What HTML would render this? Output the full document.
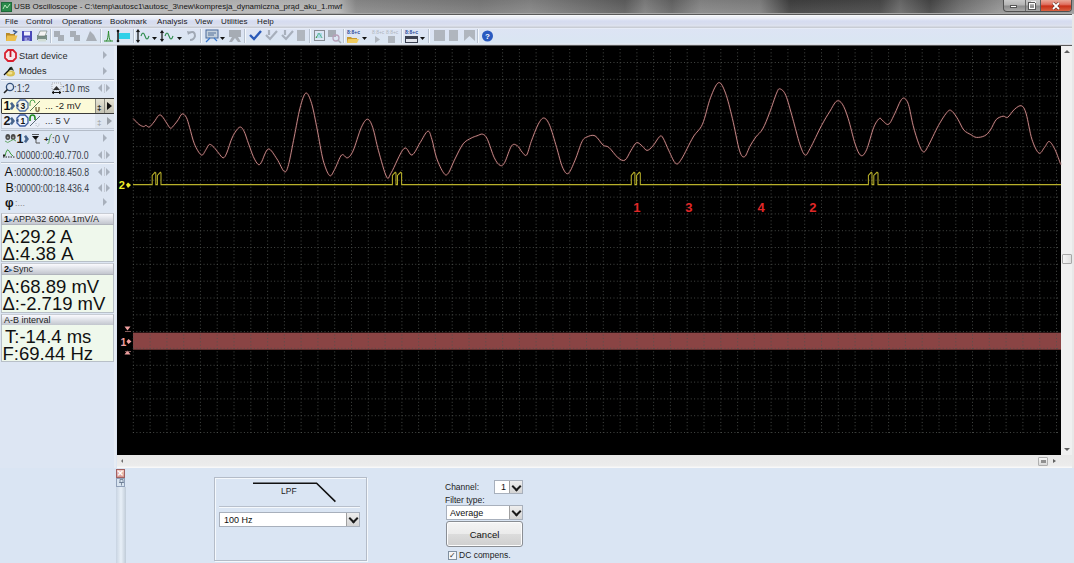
<!DOCTYPE html>
<html><head><meta charset="utf-8">
<style>
*{margin:0;padding:0;box-sizing:border-box}
html,body{width:1074px;height:563px;overflow:hidden;background:#dae5f3;font-family:"Liberation Sans",sans-serif;position:relative}
.a{position:absolute;white-space:nowrap}
#title{left:0;top:0;width:1074px;height:13px;background:linear-gradient(rgba(0,0,0,0.06),rgba(255,255,255,0.08)),linear-gradient(90deg,#a0a0a0 0,#b6b6b6 14px,#b8b8b8 338px,#8a8a8a 356px,#7a7a7a 480px,#858585 530px,#686868 600px,#5e5e5e 625px,#7e7e7e 645px,#646464 672px,#868686 700px,#808080 760px,#404040 790px,#484848 880px,#6a6a6a 900px,#464646 930px,#707070 960px,#959595 1000px,#9a9a9a 1074px)}
#title .t{left:14px;top:2px;font-size:7.95px;color:#141414}
#menu{left:0;top:15px;width:1074px;height:13px;background:linear-gradient(#ffffff 0,#f0f3f8 1px,#eceff8 3px,#d6dcf0 6px,#d8ddee 9px,#dfe3ee 11px,#c8ccd4 12px)}
#menu span{position:absolute;top:2px;font-size:8px;color:#1a1a1a;letter-spacing:0.1px}
#tb{left:0;top:28px;width:1074px;height:18px;background:linear-gradient(#eef2f8 0,#dde4f4 1px,#dae6f2 15px,#e8ecf4 16px,#c4c8d0 17px)}
#left{left:0;top:46px;width:117px;height:422px;background:#dde6f3}
#scope{left:117px;top:46px;width:944px;height:409px;background:#000}
#vsb{left:1061px;top:46px;width:11px;height:409px;background:#f0f0f0}
#rb{left:1072px;top:14px;width:2px;height:549px;background:#e8e8e8}
#hsb{left:117px;top:455px;width:955px;height:13px;background:linear-gradient(#e8e8e8,#ececec 11px,#f8f8f8 12px)}
#bottom{left:0;top:468px;width:1074px;height:95px;background:#dae5f3}
.lp{font-size:9.5px;color:#2a2a2a}
.hdr{left:1px;width:113px;height:12px;background:linear-gradient(#fafafe,#e6e8ee 35%,#c2c6ce);border:1px solid #b0b4bc;border-top-color:#c8ccd4;font-size:9px;color:#222;padding-left:2px;line-height:10px}
.val{left:1px;width:113px;background:#eff8ec;border:1px solid #b8c0c8;border-top:none}
.tri{position:absolute;width:0;height:0;border-top:4px solid transparent;border-bottom:4px solid transparent;border-left:4px solid #a8b0bc}
.lr{position:absolute;width:13px;height:9px}
.lr:before{content:"";position:absolute;left:0;top:0.5px;border-top:4px solid transparent;border-bottom:4px solid transparent;border-right:4px solid #a8b0bc}
.lr:after{content:"";position:absolute;left:8px;top:0.5px;border-top:4px solid transparent;border-bottom:4px solid transparent;border-left:4px solid #a8b0bc}
.lr i{position:absolute;left:5.5px;top:0;width:1px;height:9px;background:#c4cad4}
.num{font-size:10px;color:#3a4048;transform:scaleX(0.87);transform-origin:0 0}
.cb{background:#fff;border:1px solid #a8b0bc}
.cb span{position:absolute;top:2px;font-size:9px;color:#111}
.cb i{position:absolute;right:0;top:0;width:13px;height:100%;background:linear-gradient(#eee,#d4d4d4);border-left:1px solid #a0a0a0}
.cb i:after{content:"";position:absolute;left:2.5px;top:2px;width:5px;height:5px;border-right:2px solid #1a1a1a;border-bottom:2px solid #1a1a1a;transform:rotate(45deg)}
.big{position:absolute;left:0.5px;font-size:18.5px;color:#111;line-height:18px}
</style></head><body>
<div id="title" class="a"><svg class="a" style="left:1px;top:2px" width="11" height="10" viewBox="0 0 11 10"><rect x="0" y="0" width="11" height="10" fill="#1e6a3a"/><rect x="1" y="1" width="9" height="8" fill="#2a8a4a"/><path d="M2 7L4 3L6 6L9 2" stroke="#c8f0c8" stroke-width="0.9" fill="none"/></svg><div class="a t">USB Oscilloscope - C:\temp\autosc1\autosc_3\new\kompresja_dynamiczna_prąd_aku_1.mwf</div></div>

<div class="a" style="left:1003px;top:0;width:69px;height:12px;border:1px solid #505050;border-top:none;border-radius:0 0 4px 4px;overflow:hidden;background:linear-gradient(#c8c8c8,#b4b4b4 45%,#8c8c8c 55%,#a8a8a8)">
 <div class="a" style="left:36px;top:0;width:32px;height:11px;background:linear-gradient(#e8a898,#e07060 40%,#c83018 55%,#d86040)"></div>
 <div class="a" style="left:21px;top:0;width:1px;height:11px;background:#6a6a6a"></div>
 <div class="a" style="left:36px;top:0;width:1px;height:11px;background:#5a5a5a"></div>
 <div class="a" style="left:6px;top:5px;width:7px;height:3px;background:#fff;border:1px solid #555"></div>
 <div class="a" style="left:25px;top:3px;width:6px;height:6px;border:1.5px solid #fff;box-shadow:0 0 0 1px #555"></div>
 <div class="a" style="left:26.5px;top:1px;width:5px;height:2px;border-top:1px solid #eee;border-right:1px solid #eee"></div>
 <svg class="a" style="left:48px;top:2px" width="8" height="8" viewBox="0 0 8 8"><path d="M1 1L7 7M7 1L1 7" stroke="#5a2a20" stroke-width="3"/><path d="M1 1L7 7M7 1L1 7" stroke="#fff" stroke-width="1.8"/></svg>
</div>
<div class="a" style="left:0;top:13px;width:1074px;height:1px;background:#a8a8a8"></div>
<div class="a" style="left:0;top:14px;width:1074px;height:1px;background:#5a5a5a"></div>
<div id="menu" class="a"><span style="left:5px">File</span><span style="left:26px">Control</span><span style="left:62px">Operations</span><span style="left:110px">Bookmark</span><span style="left:157px">Analysis</span><span style="left:195px">View</span><span style="left:221px">Utilities</span><span style="left:257px">Help</span></div>

<div id="tb" class="a">
<svg class="a" style="left:0;top:-1px" width="500" height="18" viewBox="0 0 500 18">
 <g transform="translate(6,3)"><path d="M0 3H3.5L4.5 4H9V11H0Z" fill="#b88a28"/><path d="M1 5.5H11.5L9.5 11H0Z" fill="#ecc050"/><path d="M7 0.5L10.5 2L8 4" stroke="#3a5a90" stroke-width="1.4" fill="none"/></g>
 <g transform="translate(22,4)"><rect x="0" y="0" width="10" height="10" fill="#4848b8"/><rect x="2" y="0.5" width="6" height="4" fill="#f0f0ff"/><rect x="2.5" y="6.5" width="5" height="3.5" fill="#a0a0e0"/><rect x="5.5" y="7" width="1" height="2" fill="#303080"/></g>
 <g transform="translate(37,4)"><rect x="0" y="4" width="10" height="5" fill="#7a9088"/><path d="M3 0H10L8 5H1Z" fill="#f4f4f4" stroke="#6a7a70" stroke-width="0.6"/><rect x="1" y="8" width="8" height="2.5" fill="#d0dcd4"/></g>
 <path d="M50.5 2V16" stroke="#b8c2d0"/><path d="M51.5 2V16" stroke="#f4f8fc"/>
 <g fill="#a8aeb6"><rect x="54" y="4" width="6" height="6"/><rect x="58" y="8" width="6" height="6"/><rect x="70" y="4" width="6" height="6"/><rect x="74" y="8" width="6" height="6"/><path d="M86 14L90 4L94 8L97 14Z"/></g>
 <path d="M100.5 2V16" stroke="#b8c2d0"/><path d="M101.5 2V16" stroke="#f4f8fc"/>
 <path d="M104 14H113M106 14C107 14 108 12 108.5 4C109 12 110 14 111 14" stroke="#2a8a2a" stroke-width="1" fill="none"/>
 <g transform="translate(117,3)"><rect x="2" y="3" width="11" height="6" fill="#30d0e8"/><path d="M1 0V12" stroke="#111" stroke-width="1.5"/><circle cx="1" cy="1" r="1.3" fill="#111"/><circle cx="1" cy="11" r="1.3" fill="#111"/></g>
 <path d="M133.5 2V16" stroke="#b8c2d0"/><path d="M134.5 2V16" stroke="#f4f8fc"/>
 <g transform="translate(136,2)"><path d="M2 1V13M0.5 3L2 1L3.5 3M0.5 11L2 13L3.5 11" stroke="#111" stroke-width="1.2" fill="none"/><path d="M5 7Q7 1 9 7T13 7" stroke="#2a8a4a" stroke-width="1.1" fill="none"/><path d="M16 8H21L18.5 11Z" fill="#111"/></g>
 <g transform="translate(160,2)"><path d="M2 2V12M0.5 4L2 2L3.5 4M0.5 10L2 12L3.5 10" stroke="#111" stroke-width="1.2" fill="none"/><path d="M5 7Q7 1 9 7T13 7" stroke="#2a8a4a" stroke-width="1.1" fill="none"/><path d="M17 8H22L19.5 11Z" fill="#111"/></g>
 <path d="M189 6Q195 3 195 9Q194 13 190 13" stroke="#a0a8b4" stroke-width="2" fill="none"/><path d="M187 4L191 5L188 8Z" fill="#a0a8b4"/>
 <path d="M200.5 2V16" stroke="#b8c2d0"/><path d="M201.5 2V16" stroke="#f4f8fc"/>
 <g transform="translate(205,2)"><rect x="1" y="1" width="12" height="8" fill="#c4d0dc" stroke="#4a6a9a"/><path d="M3 4H11M3 6H9" stroke="#3a5a8a" stroke-width="0.8"/><path d="M5 9L1 13M9 9L12 12" stroke="#3a7ad0" stroke-width="1.2"/><path d="M15 8H20L17.5 11Z" fill="#111"/></g>
 <g transform="translate(229,2)" fill="#a6acb4"><rect x="0" y="1" width="12" height="7"/><path d="M3 8L0 13H3L6 9L9 13H12L9 8Z"/></g>
 <path d="M244.5 2V16" stroke="#b8c2d0"/><path d="M245.5 2V16" stroke="#f4f8fc"/>
 <path d="M250 8L254 12L261 4" stroke="#2a5ab8" stroke-width="2.4" fill="none"/>
 <path d="M266 8L270 12L277 4M269 3V8" stroke="#a8b0bc" stroke-width="2.2" fill="none"/>
 <path d="M282 8L286 12L293 4M285 3V8" stroke="#a8b0bc" stroke-width="2.2" fill="none"/>
 <rect x="297" y="3" width="8" height="11" fill="#b0b6be"/>
 <path d="M309.5 2V16" stroke="#b8c2d0"/><path d="M310.5 2V16" stroke="#f4f8fc"/>
 <g transform="translate(314,3)"><rect x="0.5" y="0.5" width="10" height="10" fill="none" stroke="#333" stroke-dasharray="1 1"/><path d="M2 8L5 3L8 8" stroke="#2a8a2a" fill="none"/><rect x="3" y="3" width="5" height="5" fill="#8ad0e0" opacity="0.6"/></g>
 <g transform="translate(328,2)" fill="#a6acb4"><rect x="0" y="1" width="8" height="7"/><circle cx="8" cy="9" r="3" fill="none" stroke="#b8a0b8" stroke-width="1.3"/><path d="M10 11L13 14" stroke="#a6acb4" stroke-width="1.5"/></g>
 <path d="M343.5 2V16" stroke="#b8c2d0"/><path d="M344.5 2V16" stroke="#f4f8fc"/>
 <g transform="translate(347,2)"><text x="0" y="5" font-size="5" fill="#2a4a9a" font-family="Liberation Sans" font-weight="bold">8:8+c</text><path d="M0 8H4L5 9H10V14H0Z" fill="#c89a30"/><path d="M1 10H12L10 14H0Z" fill="#f0cc60"/><path d="M15 8H20L17.5 11Z" fill="#111"/></g>
 <g transform="translate(372,2)" fill="#b0b6be"><text x="0" y="5" font-size="5" font-family="Liberation Sans">8:8+c</text><path d="M3 7L8 10.5L3 14Z"/></g>
 <g transform="translate(386,2)" fill="#b0b6be"><text x="0" y="5" font-size="5" font-family="Liberation Sans">8:8+c</text><rect x="2" y="7" width="7" height="7"/></g>
 <path d="M401.5 2V16" stroke="#b8c2d0"/><path d="M402.5 2V16" stroke="#f4f8fc"/>
 <g transform="translate(405,2)"><text x="0" y="5" font-size="5" fill="#2a4a9a" font-family="Liberation Sans" font-weight="bold">8:8+c</text><rect x="0" y="7" width="13" height="7" fill="#3a4050"/><rect x="1" y="10" width="11" height="3" fill="#e0e4ec"/><path d="M15 8H20L17.5 11Z" fill="#111"/></g>
 <path d="M428.5 2V16" stroke="#b8c2d0"/><path d="M429.5 2V16" stroke="#f4f8fc"/>
 <g fill="#b0b6be"><rect x="434" y="3" width="11" height="11"/><rect x="449" y="3" width="9" height="11"/><path d="M464 3H475V14L469.5 9L464 14Z"/></g>
 <path d="M477.5 2V16" stroke="#b8c2d0"/><path d="M478.5 2V16" stroke="#f4f8fc"/>
 <circle cx="487.5" cy="9" r="5.5" fill="#2a5ac0"/><text x="487.5" y="12" font-size="8" font-weight="bold" fill="#fff" text-anchor="middle" font-family="Liberation Sans">?</text>
</svg>
</div>


<div id="left" class="a">
 <svg class="a" style="left:4px;top:3px" width="13" height="13" viewBox="0 0 13 13"><path d="M4 1H9L12 4V9L9 12H4L1 9V4Z" fill="#f4e8ec" stroke="#d82030" stroke-width="1.8"/><rect x="5.6" y="1.5" width="1.8" height="6.5" fill="#c81828"/></svg>
 <div class="a lp" style="left:19px;top:4.5px;font-size:9.2px">Start device</div>
 <div class="a tri" style="left:103px;top:4.5px"></div>
 <svg class="a" style="left:3px;top:19px" width="13" height="12" viewBox="0 0 13 12"><ellipse cx="7.5" cy="8.5" rx="4.5" ry="3" fill="#d8c050"/><ellipse cx="7" cy="8" rx="2.5" ry="1.5" fill="#f0e090"/><path d="M5 5Q7 1 9 2L11 6Q8 4 5 5Z" fill="#2a3a2a"/><path d="M1 10L8 3" stroke="#111" stroke-width="1.3"/></svg>
 <div class="a lp" style="left:19px;top:20px;font-size:9.2px">Modes</div>
 <div class="a tri" style="left:103px;top:20.5px"></div>
 <div class="a" style="left:1px;top:33px;width:113px;height:1px;background:#b4bcc8"></div>
 <div class="a" style="left:1px;top:34px;width:113px;height:1px;background:#f4f7fb"></div>
 <svg class="a" style="left:3px;top:36px" width="12" height="12" viewBox="0 0 12 12"><circle cx="7" cy="5" r="3.6" fill="none" stroke="#33507a" stroke-width="1.3"/><path d="M4.5 7.5 L1 11" stroke="#222" stroke-width="1.6"/></svg>
 <div class="a lp" style="left:14px;top:36px;font-size:10.5px;color:#3a3e48;transform:scaleX(0.9);transform-origin:0 0">:1:2</div>
 <svg class="a" style="left:51px;top:36px" width="11" height="12" viewBox="0 0 11 12"><rect x="1" y="1" width="9" height="7" fill="#e8edf4" stroke="#888" stroke-width="0.6" stroke-dasharray="1 1"/><path d="M2 8 L5.5 4 L9 8Z" fill="#333"/><path d="M1 10.5H10M1 10.5l2-1.5M1 10.5l2 1.5M10 10.5l-2-1.5M10 10.5l-2 1.5" stroke="#111" stroke-width="1"/></svg>
 <div class="a lp" style="left:61.5px;top:36px;font-size:10.5px;color:#3a3e48;transform:scaleX(0.88);transform-origin:0 0">:10 ms</div>
 <div class="a lr" style="left:98px;top:37.5px"><i></i></div>
 <!-- channel 1 row -->
 <div class="a" style="left:1px;top:52px;width:114px;height:16px;background:#fcfad8;border:1px solid #3a3a3a;border-radius:1px"></div>
 <div class="a" style="left:95px;top:53px;width:9px;height:14px;background:linear-gradient(#e6e4d4,#c4c2b4);border-left:1px solid #8a8a80"></div>
 <div class="a" style="left:104px;top:53px;width:10px;height:14px;background:linear-gradient(#e6e4d4,#c4c2b4);border-left:1px solid #8a8a80"></div>
 <div class="a" style="left:97px;top:57px;font-size:8px;font-weight:bold;color:#111">&#x2021;</div>
 <div class="a" style="left:107px;top:56px;width:0;height:0;border-top:4px solid transparent;border-bottom:4px solid transparent;border-left:5px solid #111"></div>
 <div class="a" style="left:3.5px;top:52.5px;font-size:12.5px;font-weight:bold;color:#111">1</div>
 <svg class="a" style="left:10px;top:55.5px" width="5" height="8" viewBox="0 0 5 8"><path d="M0 1.5L2 0L5 4L2 8L0 6.5L1.5 4Z" fill="#46648c"/></svg>
 <svg class="a" style="left:16px;top:53px" width="13" height="13" viewBox="0 0 13 13"><path d="M4 1H9L12 4V9L9 12H4L1 9V4Z" fill="#f4f4e8" stroke="#5070a8" stroke-width="1.3"/><path d="M0 6.5L2.5 4.5V8.5Z" fill="#2a4a7a"/><text x="6.8" y="9.8" font-size="8.5" font-weight="bold" text-anchor="middle" fill="#111" font-family="Liberation Sans">3</text></svg>
 <svg class="a" style="left:29px;top:53px" width="12" height="14" viewBox="0 0 12 14"><path d="M1 7V4Q1 1 3.5 1Q6 1 6 4" stroke="#4aa04a" stroke-width="1" fill="none"/><path d="M1 12L11 2" stroke="#5a7a5a" stroke-width="1"/><path d="M7 8V10Q7 12.5 8.5 12.5Q10 12.5 10 10V8" stroke="#8a7a50" stroke-width="1.6" fill="none"/></svg>
 <div class="a lp" style="left:45px;top:54px;color:#222">... -2 mV</div>
 <!-- channel 2 row -->
 <div class="a" style="left:1px;top:68px;width:114px;height:15px;background:#e9eef8;border:1px solid #c4ccd8;border-top:none"></div>
 <div class="a" style="left:95px;top:68px;width:19px;height:14px;background:#dde4ee"></div>
 <div class="a" style="left:97px;top:72px;font-size:8px;color:#999">&#x2021;</div>
 <div class="a" style="left:107px;top:71px;width:0;height:0;border-top:4px solid transparent;border-bottom:4px solid transparent;border-left:5px solid #9aa0a8"></div>
 <div class="a" style="left:3.5px;top:67.5px;font-size:12.5px;font-weight:bold;color:#1a1a1a">2</div>
 <svg class="a" style="left:10px;top:71px" width="5" height="8" viewBox="0 0 5 8"><path d="M0 1.5L2 0L5 4L2 8L0 6.5L1.5 4Z" fill="#46648c"/></svg>
 <svg class="a" style="left:16px;top:68px" width="13" height="13" viewBox="0 0 13 13"><path d="M4 1H9L12 4V9L9 12H4L1 9V4Z" fill="#eef2fa" stroke="#3a5aa0" stroke-width="1.3"/><path d="M0 6.5L2.5 4.5V8.5Z" fill="#2a4a7a"/><text x="6.8" y="9.8" font-size="8.5" font-weight="bold" text-anchor="middle" fill="#111" font-family="Liberation Sans">1</text></svg>
 <svg class="a" style="left:29px;top:68px" width="12" height="14" viewBox="0 0 12 14"><path d="M1 7V4Q1 1 3.5 1Q6 1 6 4V6" stroke="#208a20" stroke-width="1.6" fill="none"/><path d="M1 12L11 2" stroke="#5a6a7a" stroke-width="1"/><path d="M7 9V10Q7 12.5 8.5 12.5Q10 12.5 10 10V9" stroke="#a0a8b0" stroke-width="0.8" stroke-dasharray="1 1" fill="none"/></svg>
 <div class="a lp" style="left:45px;top:69px;color:#333">... 5 V</div>
 <div class="a" style="left:1px;top:84px;width:113px;height:1px;background:#b4bcc8"></div>
 <!-- trigger row -->
 <svg class="a" style="left:5px;top:86px" width="11" height="12" viewBox="0 0 11 12"><ellipse cx="2.8" cy="5" rx="2.4" ry="3" fill="#4a4a4a"/><ellipse cx="8.2" cy="5" rx="2.4" ry="3" fill="#4a4a4a"/><circle cx="2.8" cy="5.5" r="1" fill="#aaa"/><circle cx="8.2" cy="5.5" r="1" fill="#aaa"/><path d="M0 9Q2.75 12 5.5 9T11 9" stroke="#5aa05a" stroke-width="0.9" fill="none"/></svg>
 <div class="a" style="left:16.5px;top:85.5px;font-size:12.5px;font-weight:bold;color:#1a1a1a">1</div>
 <svg class="a" style="left:23.5px;top:88.5px" width="5" height="8" viewBox="0 0 5 8"><path d="M0 1.5L2 0L5 4L2 8L0 6.5L1.5 4Z" fill="#46648c"/></svg>
 <svg class="a" style="left:31px;top:87px" width="10" height="11" viewBox="0 0 10 11"><path d="M1 1.5H8" stroke="#333" stroke-width="0.8"/><path d="M1 3H8L4.5 7Z" fill="#111"/><path d="M5 6V10H9" stroke="#555" stroke-width="1" fill="none"/></svg>
 <div class="a" style="left:44px;top:89px;font-size:8px;font-weight:bold;color:#222">+</div>
 <svg class="a" style="left:47px;top:87px" width="6" height="12" viewBox="0 0 6 12"><path d="M0.5 11Q2 11 2.5 6T5 1" stroke="#5aa05a" stroke-width="1" fill="none"/></svg>
 <div class="a lp" style="left:52px;top:86.5px;font-size:10.5px;color:#3a3e48;transform:scaleX(0.92);transform-origin:0 0">:0 V</div>
 <div class="a tri" style="left:103px;top:88px"></div>
 <!-- time row -->
 <svg class="a" style="left:2px;top:100px" width="14" height="13" viewBox="0 0 14 13"><path d="M3 10 Q5 1 7 5 T11 10" stroke="#3a9a3a" stroke-width="1" fill="none"/><path d="M1 11H13" stroke="#222" stroke-dasharray="1.5 1"/><path d="M2 8V11M1 9.5H3" stroke="#222"/></svg>
 <div class="a num" style="left:16px;top:104px">00000:00:40.770.0</div>
 <div class="a lr" style="left:98px;top:104px"><i></i></div>
 <div class="a" style="left:1px;top:116px;width:113px;height:1px;background:#b4bcc8"></div>
 <div class="a" style="left:1px;top:117px;width:113px;height:1px;background:#f4f7fb"></div>
 <div class="a" style="left:4.5px;top:118.5px;font-size:12.5px;color:#111">A</div>
 <div class="a num" style="left:14px;top:121px">:00000:00:18.450.8</div>
 <div class="a lr" style="left:98px;top:121px"><i></i></div>
 <div class="a" style="left:5.5px;top:134.5px;font-size:12.5px;color:#111">B</div>
 <div class="a num" style="left:14px;top:136.5px">:00000:00:18.436.4</div>
 <div class="a lr" style="left:98px;top:137px"><i></i></div>
 <div class="a" style="left:5px;top:150px;font-size:12px;font-weight:bold;color:#111">&#x3C6;</div>
 <div class="a" style="left:15px;top:152px;font-size:9px;color:#888">:...</div>
 <div class="a tri" style="left:103px;top:152px"></div>
 <!-- measure panels -->
 <div class="a hdr" style="top:167px"><b style="color:#111">1</b><span style="color:#3a6aa8;font-size:7px">&#x25B8;</span>APPA32 600A 1mV/A</div>
 <div class="a val" style="top:179px;height:37px"><div class="big" style="top:3px">A:29.2 A</div><div class="big" style="top:20.3px">&#x394;:4.38 A</div></div>
 <div class="a hdr" style="top:217px"><b style="color:#111">2</b><span style="color:#3a6aa8;font-size:7px">&#x25B8;</span>Sync</div>
 <div class="a val" style="top:229px;height:38px"><div class="big" style="top:3px">A:68.89 mV</div><div class="big" style="top:20.3px">&#x394;:-2.719 mV</div></div>
 <div class="a hdr" style="top:268px">A-B interval</div>
 <div class="a val" style="top:279px;height:37px"><div class="big" style="top:3px;left:3px">T:-14.4 ms</div><div class="big" style="top:20.3px">F:69.44 Hz</div></div>
</div>

<div class="a" style="left:114px;top:46px;width:2px;height:422px;background:#e6ecf4"></div>
<div id="scope" class="a"></div>
<div class="a" style="left:117px;top:45px;width:955px;height:1px;background:#5a5a5a"></div>
<div id="vsb" class="a">
 <div class="a" style="left:3px;top:4px;border-left:3px solid transparent;border-right:3px solid transparent;border-bottom:3px solid #606060"></div>
 <div class="a" style="left:1px;top:208px;width:10px;height:10px;background:linear-gradient(90deg,#f6f6f6,#e0e0e0);border:1px solid #a8a8a8;border-radius:1px"></div>
 <div class="a" style="left:3px;top:402px;border-left:3px solid transparent;border-right:3px solid transparent;border-top:3px solid #606060"></div>
</div>
<div id="rb" class="a"></div>

<div id="hsb" class="a">
 <div class="a" style="left:4px;top:4px;border-top:2.5px solid transparent;border-bottom:2.5px solid transparent;border-right:2.5px solid #707070"></div>
 <div class="a" style="left:921px;top:2px;width:10px;height:9px;background:linear-gradient(#f8f8f8,#d8d8d8);border:1px solid #b0b0b0;border-radius:1px"><div class="a" style="left:2px;top:2px;width:5px;height:3px;background:#909090"></div></div>
 <div class="a" style="left:936px;top:4px;border-top:2.5px solid transparent;border-bottom:2.5px solid transparent;border-left:3px solid #606060"></div>
</div>
<div id="bottom" class="a">
 <div class="a" style="left:116px;top:0;width:10px;height:95px;background:linear-gradient(90deg,#c8d4e2,#e8f0f8 50%,#c0ccd8)"></div>
 <div class="a" style="left:116px;top:0;width:10px;height:19px;background:#dae5f3"></div>
 <div class="a" style="left:116px;top:1px;width:9px;height:9px;background:linear-gradient(#f0c8c0,#d89890);border:1px solid #a06060;color:#fff;font-size:8px;line-height:7px;text-align:center;font-weight:bold">&#x2715;</div>
 <div class="a" style="left:116px;top:10px;width:9px;height:9px;background:#d8e4f0;border:1px solid #90a0b8"><svg class="a" style="left:1px;top:0" width="7" height="7" viewBox="0 0 7 7"><path d="M2 0.5H5V3.5H2ZM1 3.5H6M3.5 3.5V6.5" stroke="#6a7a90" stroke-width="0.8" fill="none"/></svg></div>
 <div class="a" style="left:214px;top:9px;width:153px;height:84px;border:1px solid #b4bcc8;box-shadow:inset 1px 1px 0 #f4f8fc, 1px 1px 0 #f4f8fc"></div>
 <svg class="a" style="left:240px;top:10px" width="110" height="30" viewBox="0 0 110 30"><path d="M13 5.3H76.6L95.4 23.6" stroke="#111" stroke-width="1.6" fill="none"/></svg>
 <div class="a" style="left:281px;top:18px;font-size:8.5px;color:#222">LPF</div>
 <div class="a" style="left:219px;top:38px;width:141px;height:1px;background:#b8c0cc"></div>
 <div class="a" style="left:219px;top:39px;width:141px;height:1px;background:#f4f8fc"></div>
 <div class="a cb" style="left:219px;top:44px;width:141px;height:15px"><span style="left:4px">100 Hz</span><i></i></div>
 <div class="a" style="left:445px;top:14px;font-size:8.5px;color:#222">Channel:</div>
 <div class="a cb" style="left:494px;top:12px;width:29px;height:14px"><span style="left:6px;top:1px">1</span><i></i></div>
 <div class="a" style="left:445px;top:27px;font-size:8.5px;color:#222">Filter type:</div>
 <div class="a cb" style="left:446px;top:37px;width:77px;height:15px"><span style="left:3px">Average</span><i></i></div>
 <div class="a" style="left:446px;top:53px;width:77px;height:26px;border:1px solid #8a8e94;border-radius:3px;background:linear-gradient(#f4f4f4,#ebebeb 50%,#dcdcdc 51%,#cfcfcf);box-shadow:inset 0 0 0 1px #fcfcfc"><div class="a" style="left:0;width:75px;top:7px;text-align:center;font-size:9.5px;color:#111">Cancel</div></div>
 <div class="a" style="left:448px;top:83px;width:9px;height:9px;border:1px solid #8090a0;background:#f4f6f8;font-size:8px;line-height:7px;color:#333;text-align:center">&#x2713;</div>
 <div class="a" style="left:459px;top:82px;font-size:8.5px;color:#222">DC compens.</div>
</div>

<svg class="a" style="left:0;top:0" width="1074" height="563" viewBox="0 0 1074 563">
<rect x="133" y="332.7" width="928" height="17" fill="#8a4444"/>
<g stroke="#505450" stroke-opacity="0.85" stroke-width="1" stroke-dasharray="1 2.36" fill="none">
<line x1="133" y1="62.5" x2="1058" y2="62.5"/>
<line x1="133" y1="79.3" x2="1058" y2="79.3"/>
<line x1="133" y1="96.1" x2="1058" y2="96.1"/>
<line x1="133" y1="113.0" x2="1058" y2="113.0"/>
<line x1="133" y1="129.8" x2="1058" y2="129.8"/>
<line x1="133" y1="146.6" x2="1058" y2="146.6"/>
<line x1="133" y1="163.4" x2="1058" y2="163.4"/>
<line x1="133" y1="180.2" x2="1058" y2="180.2"/>
<line x1="133" y1="197.1" x2="1058" y2="197.1"/>
<line x1="133" y1="213.9" x2="1058" y2="213.9"/>
<line x1="133" y1="230.7" x2="1058" y2="230.7"/>
<line x1="133" y1="247.5" x2="1058" y2="247.5"/>
<line x1="133" y1="264.3" x2="1058" y2="264.3"/>
<line x1="133" y1="281.2" x2="1058" y2="281.2"/>
<line x1="133" y1="298.0" x2="1058" y2="298.0"/>
<line x1="133" y1="314.8" x2="1058" y2="314.8"/>
<line x1="133" y1="331.6" x2="1058" y2="331.6"/>
<line x1="133" y1="348.4" x2="1058" y2="348.4"/>
<line x1="133" y1="365.3" x2="1058" y2="365.3"/>
<line x1="133" y1="382.1" x2="1058" y2="382.1"/>
<line x1="133" y1="398.9" x2="1058" y2="398.9"/>
<line x1="133" y1="415.7" x2="1058" y2="415.7"/>
<line x1="133" y1="432.5" x2="1058" y2="432.5"/>
<line x1="133.3" y1="49" x2="133.3" y2="433"/>
<line x1="150.1" y1="49" x2="150.1" y2="433"/>
<line x1="166.9" y1="49" x2="166.9" y2="433"/>
<line x1="183.7" y1="49" x2="183.7" y2="433"/>
<line x1="200.4" y1="49" x2="200.4" y2="433"/>
<line x1="217.2" y1="49" x2="217.2" y2="433"/>
<line x1="234.0" y1="49" x2="234.0" y2="433"/>
<line x1="250.8" y1="49" x2="250.8" y2="433"/>
<line x1="267.6" y1="49" x2="267.6" y2="433"/>
<line x1="284.4" y1="49" x2="284.4" y2="433"/>
<line x1="301.1" y1="49" x2="301.1" y2="433"/>
<line x1="317.9" y1="49" x2="317.9" y2="433"/>
<line x1="334.7" y1="49" x2="334.7" y2="433"/>
<line x1="351.5" y1="49" x2="351.5" y2="433"/>
<line x1="368.3" y1="49" x2="368.3" y2="433"/>
<line x1="385.1" y1="49" x2="385.1" y2="433"/>
<line x1="401.9" y1="49" x2="401.9" y2="433"/>
<line x1="418.6" y1="49" x2="418.6" y2="433"/>
<line x1="435.4" y1="49" x2="435.4" y2="433"/>
<line x1="452.2" y1="49" x2="452.2" y2="433"/>
<line x1="469.0" y1="49" x2="469.0" y2="433"/>
<line x1="485.8" y1="49" x2="485.8" y2="433"/>
<line x1="502.6" y1="49" x2="502.6" y2="433"/>
<line x1="519.4" y1="49" x2="519.4" y2="433"/>
<line x1="536.1" y1="49" x2="536.1" y2="433"/>
<line x1="552.9" y1="49" x2="552.9" y2="433"/>
<line x1="569.7" y1="49" x2="569.7" y2="433"/>
<line x1="586.5" y1="49" x2="586.5" y2="433"/>
<line x1="603.3" y1="49" x2="603.3" y2="433"/>
<line x1="620.1" y1="49" x2="620.1" y2="433"/>
<line x1="636.9" y1="49" x2="636.9" y2="433"/>
<line x1="653.6" y1="49" x2="653.6" y2="433"/>
<line x1="670.4" y1="49" x2="670.4" y2="433"/>
<line x1="687.2" y1="49" x2="687.2" y2="433"/>
<line x1="704.0" y1="49" x2="704.0" y2="433"/>
<line x1="720.8" y1="49" x2="720.8" y2="433"/>
<line x1="737.6" y1="49" x2="737.6" y2="433"/>
<line x1="754.3" y1="49" x2="754.3" y2="433"/>
<line x1="771.1" y1="49" x2="771.1" y2="433"/>
<line x1="787.9" y1="49" x2="787.9" y2="433"/>
<line x1="804.7" y1="49" x2="804.7" y2="433"/>
<line x1="821.5" y1="49" x2="821.5" y2="433"/>
<line x1="838.3" y1="49" x2="838.3" y2="433"/>
<line x1="855.1" y1="49" x2="855.1" y2="433"/>
<line x1="871.8" y1="49" x2="871.8" y2="433"/>
<line x1="888.6" y1="49" x2="888.6" y2="433"/>
<line x1="905.4" y1="49" x2="905.4" y2="433"/>
<line x1="922.2" y1="49" x2="922.2" y2="433"/>
<line x1="939.0" y1="49" x2="939.0" y2="433"/>
<line x1="955.8" y1="49" x2="955.8" y2="433"/>
<line x1="972.5" y1="49" x2="972.5" y2="433"/>
<line x1="989.3" y1="49" x2="989.3" y2="433"/>
<line x1="1006.1" y1="49" x2="1006.1" y2="433"/>
<line x1="1022.9" y1="49" x2="1022.9" y2="433"/>
<line x1="1039.7" y1="49" x2="1039.7" y2="433"/>
<line x1="1056.5" y1="49" x2="1056.5" y2="433"/>
</g>

<path d="M133 184.6H152.2V175.5L155 172.3L155.8 173V184.6H157.4V175.5L160.3 172.3L161 173V184.6H392.4V175.5L395.2 172.3L396 173V184.6H397.5V175.5L400.6 172.3L401.6 173V184.6H631.3V175.5L634 172.3L634.9 173V184.6H636.6V175.5L639.3 172.3L640.3 173V184.6H868.4V175.5L871.2 172.3L872 173V184.6H873.8V175.5L877 172.3L878 173V184.6H1061" stroke="#b8b02a" stroke-width="1.05" fill="none"/>
<path d="M133.2 118.5C134.1 119.5 137.2 123.0 138.9 124.3C140.6 125.6 142.4 126.4 143.6 126.6C144.8 126.8 144.9 125.3 145.9 125.4C146.9 125.5 148.0 127.6 149.3 127.0C150.7 126.4 152.4 123.9 154.0 122.0C155.6 120.1 157.3 116.5 158.6 115.5C159.9 114.5 160.7 114.9 162.0 116.2C163.3 117.5 165.3 121.1 166.7 123.1C168.1 125.1 169.3 128.0 170.6 128.2C171.9 128.4 173.4 125.7 174.7 124.3C176.0 122.9 177.0 121.4 178.2 119.7C179.4 118.0 180.8 114.3 182.1 113.9C183.4 113.5 185.0 115.0 186.3 117.3C187.6 119.6 188.3 123.3 189.7 127.7C191.0 132.1 192.5 139.3 194.4 143.9C196.3 148.5 199.4 154.0 201.3 155.0C203.2 156.0 204.6 151.5 205.9 149.7C207.2 147.9 208.1 144.8 209.4 144.4C210.8 144.0 212.5 146.0 214.0 147.4C215.5 148.8 217.1 151.4 218.6 153.1C220.1 154.8 221.8 157.8 223.2 157.8C224.5 157.8 225.1 156.6 226.7 153.1C228.2 149.6 230.4 141.3 232.5 137.0C234.6 132.7 237.5 128.3 239.4 127.3C241.3 126.3 242.5 128.4 244.0 131.2C245.5 134.0 247.0 139.7 248.6 143.9C250.2 148.1 251.8 153.2 253.3 156.6C254.9 160.0 256.6 163.2 257.9 164.2C259.2 165.2 259.6 164.9 261.3 162.4C263.0 159.9 265.7 149.6 268.3 149.0C270.9 148.4 274.2 155.1 276.9 158.9C279.6 162.7 282.4 170.6 284.3 171.6C286.2 172.6 286.9 170.5 288.5 164.7C290.1 158.9 292.3 146.4 294.2 137.0C296.1 127.6 298.1 115.4 300.0 108.1C301.9 100.8 303.9 93.9 305.8 93.1C307.7 92.3 309.7 97.3 311.6 103.5C313.5 109.7 315.4 120.6 317.3 130.0C319.2 139.4 321.1 152.5 323.1 160.1C325.2 167.7 327.7 174.0 329.6 175.5C331.5 177.0 332.7 172.7 334.7 169.3C336.7 165.9 339.5 156.9 341.6 155.0C343.7 153.1 345.5 158.5 347.4 157.8C349.3 157.1 350.8 155.8 353.1 150.8C355.4 145.8 358.8 133.0 361.2 127.7C363.6 122.4 365.6 119.2 367.5 119.2C369.4 119.2 371.0 122.4 372.8 127.7C374.6 133.0 376.2 142.6 378.5 150.8C380.8 159.0 384.5 173.2 386.6 176.9C388.7 180.6 388.3 177.5 391.2 172.8C394.1 168.1 400.5 151.5 404.0 148.5C407.5 145.5 409.3 156.0 412.0 155.0C414.7 154.0 417.5 146.7 420.1 142.7C422.7 138.7 425.8 131.8 427.8 131.2C429.8 130.6 430.4 134.9 431.9 139.3C433.3 143.7 434.6 152.2 436.5 157.8C438.4 163.4 441.6 170.2 443.5 172.8C445.4 175.4 446.2 175.8 448.1 173.5C450.0 171.2 452.5 163.8 455.0 158.9C457.5 154.0 460.4 147.4 463.1 143.9C465.8 140.4 468.9 139.4 471.2 138.1C473.5 136.8 475.1 136.5 477.0 135.8C478.9 135.2 481.0 133.6 482.7 134.2C484.4 134.8 485.5 135.4 487.4 139.3C489.3 143.2 492.2 153.5 494.3 157.8C496.4 162.2 498.4 164.6 500.1 165.4C501.8 166.2 502.8 165.7 504.7 162.4C506.6 159.1 509.5 148.6 511.6 145.8C513.7 143.0 515.7 144.8 517.4 145.8C519.1 146.8 520.5 150.5 522.0 152.0C523.5 153.5 525.1 156.7 526.6 155.0C528.1 153.3 529.3 146.7 531.2 141.6C533.1 136.5 536.1 128.2 538.2 124.3C540.3 120.4 542.0 117.8 543.9 118.0C545.8 118.2 547.6 120.5 549.7 125.4C551.8 130.3 554.5 140.5 556.6 147.4C558.7 154.3 560.5 162.7 562.4 167.0C564.3 171.3 566.1 174.7 568.2 173.5C570.3 172.3 572.8 165.4 575.1 160.1C577.4 154.8 580.0 145.4 582.0 141.6C584.0 137.8 584.7 138.0 586.9 137.0C589.1 136.0 592.3 134.5 595.0 135.8C597.7 137.2 600.8 143.2 603.1 145.1C605.4 147.0 606.4 145.3 608.9 147.4C611.4 149.5 615.4 155.7 618.1 157.8C620.8 159.9 622.9 161.3 625.0 160.1C627.1 158.9 628.9 153.7 630.8 150.8C632.7 147.9 634.7 143.5 636.6 142.7C638.5 141.9 640.7 144.9 642.4 146.2C644.1 147.5 645.3 150.4 647.0 150.4C648.7 150.4 650.6 148.5 652.7 146.2C654.8 143.9 658.0 137.8 659.7 136.5C661.4 135.2 661.6 135.7 663.1 138.1C664.6 140.5 666.8 146.6 668.9 150.8C671.0 155.0 673.7 162.2 675.8 163.5C677.9 164.8 678.7 163.3 681.6 158.9C684.5 154.5 689.7 142.8 693.2 137.0C696.7 131.2 699.5 130.8 702.4 124.3C705.3 117.8 707.8 104.6 710.5 97.7C713.2 90.8 716.1 83.5 718.6 82.7C721.1 81.9 723.2 87.1 725.5 93.1C727.8 99.1 730.0 108.9 732.4 118.5C734.8 128.1 737.5 144.5 739.6 150.8C741.7 157.2 743.0 157.4 744.7 156.6C746.4 155.8 748.1 149.5 750.0 146.2C751.9 142.9 753.7 139.9 755.8 137.0C757.9 134.1 760.4 133.0 762.7 128.9C765.0 124.9 767.3 118.7 769.6 112.7C771.9 106.7 774.9 97.1 776.6 93.1C778.3 89.1 778.5 88.5 780.0 88.9C781.5 89.3 783.7 90.5 785.8 95.4C787.9 100.3 790.4 110.4 792.7 118.5C795.0 126.6 797.7 137.8 799.7 143.9C801.8 150.0 803.3 154.2 805.0 155.0C806.7 155.8 807.3 153.4 810.1 148.5C812.9 143.6 818.3 131.6 821.6 125.4C824.9 119.2 827.2 115.6 829.7 111.6C832.2 107.6 834.5 102.4 836.6 101.2C838.7 100.0 840.5 101.3 842.4 104.2C844.3 107.1 846.1 111.9 848.2 118.5C850.3 125.1 853.0 137.7 855.1 143.9C857.2 150.1 859.0 154.5 860.9 155.5C862.8 156.5 864.5 154.3 866.6 149.7C868.7 145.1 871.5 132.9 873.6 127.7C875.7 122.5 877.8 119.7 879.3 118.5C880.8 117.3 881.2 119.8 882.8 120.8C884.3 121.8 886.6 125.4 888.6 124.3C890.6 123.2 892.6 117.8 894.6 113.9C896.6 110.1 898.8 103.8 900.4 101.2C902.0 98.6 902.9 97.6 904.3 98.2C905.6 98.8 907.0 100.1 908.5 104.6C910.0 109.1 911.4 118.9 913.1 125.4C914.8 132.0 917.1 139.5 918.8 143.9C920.5 148.3 922.0 151.5 923.5 151.9C925.0 152.3 925.6 150.6 928.1 146.2C930.6 141.8 935.2 131.2 938.5 125.4C941.8 119.6 945.4 113.8 947.7 111.5C950.0 109.2 950.6 110.2 952.3 111.5C954.0 112.8 956.2 116.5 958.1 119.6C960.0 122.7 961.7 127.5 963.8 130.0C965.9 132.5 968.7 133.4 970.8 134.6C972.9 135.8 974.2 137.2 976.5 137.4C978.8 137.6 982.3 137.0 984.6 135.8C986.9 134.6 988.5 132.7 990.4 130.0C992.3 127.3 994.1 121.9 996.2 119.6C998.3 117.3 1001.2 116.6 1003.1 116.2C1005.0 115.8 1005.8 118.5 1007.7 117.3C1009.6 116.1 1012.3 111.1 1014.6 109.2C1016.9 107.3 1019.6 105.0 1021.5 105.8C1023.4 106.6 1024.5 108.3 1026.2 113.9C1027.9 119.5 1029.8 132.7 1031.9 139.2C1034.0 145.7 1036.8 151.8 1038.9 153.1C1041.0 154.4 1042.9 149.2 1044.6 147.3C1046.3 145.4 1047.5 141.1 1049.2 141.5C1050.9 141.9 1053.1 145.8 1055.0 149.6C1056.9 153.4 1059.8 162.1 1060.8 164.6" stroke="#3a1010" stroke-width="2.4" stroke-opacity="0.25" fill="none"/>
<path d="M133.2 118.5C134.1 119.5 137.2 123.0 138.9 124.3C140.6 125.6 142.4 126.4 143.6 126.6C144.8 126.8 144.9 125.3 145.9 125.4C146.9 125.5 148.0 127.6 149.3 127.0C150.7 126.4 152.4 123.9 154.0 122.0C155.6 120.1 157.3 116.5 158.6 115.5C159.9 114.5 160.7 114.9 162.0 116.2C163.3 117.5 165.3 121.1 166.7 123.1C168.1 125.1 169.3 128.0 170.6 128.2C171.9 128.4 173.4 125.7 174.7 124.3C176.0 122.9 177.0 121.4 178.2 119.7C179.4 118.0 180.8 114.3 182.1 113.9C183.4 113.5 185.0 115.0 186.3 117.3C187.6 119.6 188.3 123.3 189.7 127.7C191.0 132.1 192.5 139.3 194.4 143.9C196.3 148.5 199.4 154.0 201.3 155.0C203.2 156.0 204.6 151.5 205.9 149.7C207.2 147.9 208.1 144.8 209.4 144.4C210.8 144.0 212.5 146.0 214.0 147.4C215.5 148.8 217.1 151.4 218.6 153.1C220.1 154.8 221.8 157.8 223.2 157.8C224.5 157.8 225.1 156.6 226.7 153.1C228.2 149.6 230.4 141.3 232.5 137.0C234.6 132.7 237.5 128.3 239.4 127.3C241.3 126.3 242.5 128.4 244.0 131.2C245.5 134.0 247.0 139.7 248.6 143.9C250.2 148.1 251.8 153.2 253.3 156.6C254.9 160.0 256.6 163.2 257.9 164.2C259.2 165.2 259.6 164.9 261.3 162.4C263.0 159.9 265.7 149.6 268.3 149.0C270.9 148.4 274.2 155.1 276.9 158.9C279.6 162.7 282.4 170.6 284.3 171.6C286.2 172.6 286.9 170.5 288.5 164.7C290.1 158.9 292.3 146.4 294.2 137.0C296.1 127.6 298.1 115.4 300.0 108.1C301.9 100.8 303.9 93.9 305.8 93.1C307.7 92.3 309.7 97.3 311.6 103.5C313.5 109.7 315.4 120.6 317.3 130.0C319.2 139.4 321.1 152.5 323.1 160.1C325.2 167.7 327.7 174.0 329.6 175.5C331.5 177.0 332.7 172.7 334.7 169.3C336.7 165.9 339.5 156.9 341.6 155.0C343.7 153.1 345.5 158.5 347.4 157.8C349.3 157.1 350.8 155.8 353.1 150.8C355.4 145.8 358.8 133.0 361.2 127.7C363.6 122.4 365.6 119.2 367.5 119.2C369.4 119.2 371.0 122.4 372.8 127.7C374.6 133.0 376.2 142.6 378.5 150.8C380.8 159.0 384.5 173.2 386.6 176.9C388.7 180.6 388.3 177.5 391.2 172.8C394.1 168.1 400.5 151.5 404.0 148.5C407.5 145.5 409.3 156.0 412.0 155.0C414.7 154.0 417.5 146.7 420.1 142.7C422.7 138.7 425.8 131.8 427.8 131.2C429.8 130.6 430.4 134.9 431.9 139.3C433.3 143.7 434.6 152.2 436.5 157.8C438.4 163.4 441.6 170.2 443.5 172.8C445.4 175.4 446.2 175.8 448.1 173.5C450.0 171.2 452.5 163.8 455.0 158.9C457.5 154.0 460.4 147.4 463.1 143.9C465.8 140.4 468.9 139.4 471.2 138.1C473.5 136.8 475.1 136.5 477.0 135.8C478.9 135.2 481.0 133.6 482.7 134.2C484.4 134.8 485.5 135.4 487.4 139.3C489.3 143.2 492.2 153.5 494.3 157.8C496.4 162.2 498.4 164.6 500.1 165.4C501.8 166.2 502.8 165.7 504.7 162.4C506.6 159.1 509.5 148.6 511.6 145.8C513.7 143.0 515.7 144.8 517.4 145.8C519.1 146.8 520.5 150.5 522.0 152.0C523.5 153.5 525.1 156.7 526.6 155.0C528.1 153.3 529.3 146.7 531.2 141.6C533.1 136.5 536.1 128.2 538.2 124.3C540.3 120.4 542.0 117.8 543.9 118.0C545.8 118.2 547.6 120.5 549.7 125.4C551.8 130.3 554.5 140.5 556.6 147.4C558.7 154.3 560.5 162.7 562.4 167.0C564.3 171.3 566.1 174.7 568.2 173.5C570.3 172.3 572.8 165.4 575.1 160.1C577.4 154.8 580.0 145.4 582.0 141.6C584.0 137.8 584.7 138.0 586.9 137.0C589.1 136.0 592.3 134.5 595.0 135.8C597.7 137.2 600.8 143.2 603.1 145.1C605.4 147.0 606.4 145.3 608.9 147.4C611.4 149.5 615.4 155.7 618.1 157.8C620.8 159.9 622.9 161.3 625.0 160.1C627.1 158.9 628.9 153.7 630.8 150.8C632.7 147.9 634.7 143.5 636.6 142.7C638.5 141.9 640.7 144.9 642.4 146.2C644.1 147.5 645.3 150.4 647.0 150.4C648.7 150.4 650.6 148.5 652.7 146.2C654.8 143.9 658.0 137.8 659.7 136.5C661.4 135.2 661.6 135.7 663.1 138.1C664.6 140.5 666.8 146.6 668.9 150.8C671.0 155.0 673.7 162.2 675.8 163.5C677.9 164.8 678.7 163.3 681.6 158.9C684.5 154.5 689.7 142.8 693.2 137.0C696.7 131.2 699.5 130.8 702.4 124.3C705.3 117.8 707.8 104.6 710.5 97.7C713.2 90.8 716.1 83.5 718.6 82.7C721.1 81.9 723.2 87.1 725.5 93.1C727.8 99.1 730.0 108.9 732.4 118.5C734.8 128.1 737.5 144.5 739.6 150.8C741.7 157.2 743.0 157.4 744.7 156.6C746.4 155.8 748.1 149.5 750.0 146.2C751.9 142.9 753.7 139.9 755.8 137.0C757.9 134.1 760.4 133.0 762.7 128.9C765.0 124.9 767.3 118.7 769.6 112.7C771.9 106.7 774.9 97.1 776.6 93.1C778.3 89.1 778.5 88.5 780.0 88.9C781.5 89.3 783.7 90.5 785.8 95.4C787.9 100.3 790.4 110.4 792.7 118.5C795.0 126.6 797.7 137.8 799.7 143.9C801.8 150.0 803.3 154.2 805.0 155.0C806.7 155.8 807.3 153.4 810.1 148.5C812.9 143.6 818.3 131.6 821.6 125.4C824.9 119.2 827.2 115.6 829.7 111.6C832.2 107.6 834.5 102.4 836.6 101.2C838.7 100.0 840.5 101.3 842.4 104.2C844.3 107.1 846.1 111.9 848.2 118.5C850.3 125.1 853.0 137.7 855.1 143.9C857.2 150.1 859.0 154.5 860.9 155.5C862.8 156.5 864.5 154.3 866.6 149.7C868.7 145.1 871.5 132.9 873.6 127.7C875.7 122.5 877.8 119.7 879.3 118.5C880.8 117.3 881.2 119.8 882.8 120.8C884.3 121.8 886.6 125.4 888.6 124.3C890.6 123.2 892.6 117.8 894.6 113.9C896.6 110.1 898.8 103.8 900.4 101.2C902.0 98.6 902.9 97.6 904.3 98.2C905.6 98.8 907.0 100.1 908.5 104.6C910.0 109.1 911.4 118.9 913.1 125.4C914.8 132.0 917.1 139.5 918.8 143.9C920.5 148.3 922.0 151.5 923.5 151.9C925.0 152.3 925.6 150.6 928.1 146.2C930.6 141.8 935.2 131.2 938.5 125.4C941.8 119.6 945.4 113.8 947.7 111.5C950.0 109.2 950.6 110.2 952.3 111.5C954.0 112.8 956.2 116.5 958.1 119.6C960.0 122.7 961.7 127.5 963.8 130.0C965.9 132.5 968.7 133.4 970.8 134.6C972.9 135.8 974.2 137.2 976.5 137.4C978.8 137.6 982.3 137.0 984.6 135.8C986.9 134.6 988.5 132.7 990.4 130.0C992.3 127.3 994.1 121.9 996.2 119.6C998.3 117.3 1001.2 116.6 1003.1 116.2C1005.0 115.8 1005.8 118.5 1007.7 117.3C1009.6 116.1 1012.3 111.1 1014.6 109.2C1016.9 107.3 1019.6 105.0 1021.5 105.8C1023.4 106.6 1024.5 108.3 1026.2 113.9C1027.9 119.5 1029.8 132.7 1031.9 139.2C1034.0 145.7 1036.8 151.8 1038.9 153.1C1041.0 154.4 1042.9 149.2 1044.6 147.3C1046.3 145.4 1047.5 141.1 1049.2 141.5C1050.9 141.9 1053.1 145.8 1055.0 149.6C1056.9 153.4 1059.8 162.1 1060.8 164.6" stroke="#d49494" stroke-width="0.9" fill="none"/>
<g font-family="Liberation Sans" font-weight="bold" font-size="13" fill="#e02828" text-anchor="middle"><text x="636.8" y="212.4">1</text><text x="688.8" y="212.4">3</text><text x="761" y="212.4">4</text><text x="812.8" y="212.4">2</text></g>
<text x="118.8" y="188.6" font-family="Liberation Sans" font-weight="bold" font-size="11" fill="#ecec28">2</text><path d="M126 184.8L128 182.5L131 185L128 188Z" fill="#ecec28"/>
<text x="120.5" y="345.5" font-family="Liberation Sans" font-weight="bold" font-size="10.5" fill="#f0a0a0">1</text><path d="M126.5 341.5L128.5 339L131.5 341.5L128.5 344Z" fill="#f0a0a0"/>
<path d="M124.5 326.5H130.5L127.5 330.5Z" fill="#f0a0a0"/><path d="M124.5 354.5H130.5L127.5 350.5Z" fill="#f0a0a0"/><path d="M125 331.5H131M125 351.5H131" stroke="#a07070" stroke-width="0.8"/>
</svg>
</body></html>
